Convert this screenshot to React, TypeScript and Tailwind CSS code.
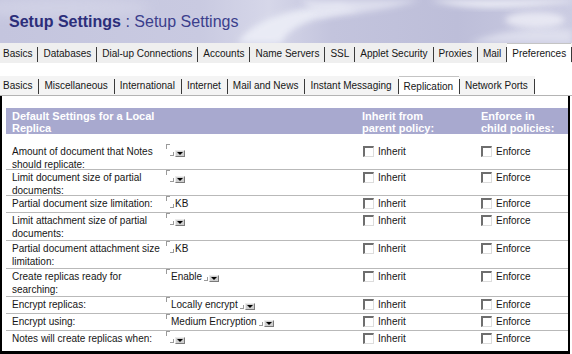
import React from "react";

const row1 = ["Basics", "Databases", "Dial-up Connections", "Accounts", "Name Servers", "SSL", "Applet Security", "Proxies", "Mail", "Preferences"];
const row2 = ["Basics", "Miscellaneous", "International", "Internet", "Mail and News", "Instant Messaging", "Replication", "Network Ports"];

function TabRow({ tabs, active, className, pad }: { tabs: string[]; active: string; className: string; pad: string }) {
  return (
    <div className={`flex items-stretch whitespace-nowrap pl-[3px] ${className}`}>
      {tabs.map((t, i) => (
        <React.Fragment key={i}>
          <div
            className={`flex shrink-0 items-center ${pad} ${i === 0 ? "pl-0" : "pl-[5px]"} ${
              t === active ? "bg-white border-t border-[#c4c4c4]" : ""
            }`}
          >
            {t}
          </div>
          <div className="mb-[1px] h-[15px] w-px shrink-0 self-end bg-[#3a3a3a]" />
        </React.Fragment>
      ))}
    </div>
  );
}

function Drop() {
  return (
    <span className="ml-[1px] mt-[5px] flex h-[7px] w-[10px] items-center justify-center border border-b-[#7a7a7a] border-l-[#ececec] border-r-[#7a7a7a] border-t-[#ececec] bg-[#cfcfcf]">
      <span className="h-0 w-0 border-l-[3px] border-r-[3px] border-t-[3px] border-l-transparent border-r-transparent border-t-black" />
    </span>
  );
}

function Field({ text, drop, suffix }: { text?: string; drop?: boolean; suffix?: string }) {
  return (
    <div className="flex items-start pl-[4px] whitespace-nowrap">
      <span className="-mt-[1px] h-[5px] w-[4px] border-l border-t border-[#9a9a9a]" />
      {text && <span className="ml-[1px] leading-[13px]">{text}</span>}
      <span className={`mt-[7px] h-[4px] w-[4px] border-b border-r border-[#9a9a9a] ${text ? "ml-[2px]" : ""}`} />
      {drop && <Drop />}
      {suffix && <span className="ml-[1px] leading-[13px]">{suffix}</span>}
    </div>
  );
}

function Check({ label }: { label: string }) {
  return (
    <div className="flex items-start pl-[6px]">
      <span className="mt-[1px] h-[11px] w-[11px] border-b border-l-2 border-r border-t-2 border-b-[#dcdcdc] border-l-[#6e6e6e] border-r-[#dcdcdc] border-t-[#6e6e6e] bg-white" />
      <span className="ml-[4px] leading-[13px]">{label}</span>
    </div>
  );
}

type Row = { label: string[]; h: string; pt?: string; field: { text?: string; drop?: boolean; suffix?: string }; last?: boolean };

const rows: Row[] = [
  { label: ["Amount of document that Notes", "should replicate:"], h: "h-[36px]", pt: "pt-[11px]", field: { drop: true } },
  { label: ["Limit document size of partial", "documents:"], h: "h-[26px]", field: { drop: true } },
  { label: ["Partial document size limitation:"], h: "h-[17px]", field: { suffix: "KB" } },
  { label: ["Limit attachment size of partial", "documents:"], h: "h-[28px]", field: { drop: true } },
  { label: ["Partial document attachment size", "limitation:"], h: "h-[28px]", field: { suffix: "KB" } },
  { label: ["Create replicas ready for", "searching:"], h: "h-[28px]", field: { text: "Enable", drop: true } },
  { label: ["Encrypt replicas:"], h: "h-[17px]", field: { text: "Locally encrypt", drop: true } },
  { label: ["Encrypt using:"], h: "h-[17px]", field: { text: "Medium Encryption", drop: true } },
  { label: ["Notes will create replicas when:"], h: "h-[20px]", field: { drop: true }, last: true },
];

function Banner() {
  return (
    <div className="relative h-[43px] w-full overflow-hidden">
      <svg className="absolute left-0 top-0" width="572" height="43" viewBox="0 0 572 43">
        <defs>
          <linearGradient id="bg" x1="0" x2="1" y1="0" y2="0">
            <stop offset="0" stopColor="#c4c5de" />
            <stop offset="0.35" stopColor="#c9cae1" />
            <stop offset="0.47" stopColor="#d6d7e9" />
            <stop offset="0.58" stopColor="#c3c4dd" />
            <stop offset="0.8" stopColor="#bdbed9" />
            <stop offset="1" stopColor="#cbcce2" />
          </linearGradient>
          <filter id="bl" x="-20%" y="-50%" width="140%" height="200%">
            <feGaussianBlur stdDeviation="3" />
          </filter>
          <filter id="bl2" x="-20%" y="-50%" width="140%" height="200%">
            <feGaussianBlur stdDeviation="6" />
          </filter>
        </defs>
        <rect width="572" height="43" fill="url(#bg)" />
        <ellipse cx="60" cy="8" rx="90" ry="10" fill="#d8d9ea" opacity="0.6" filter="url(#bl2)" />
        <path d="M238 43 C 248 24, 285 8, 340 4 L 360 10 C 310 16, 285 30, 282 43 Z" fill="#eceef7" opacity="0.9" filter="url(#bl)" />
        <path d="M300 0 L 420 0 C 390 10, 350 14, 320 18 Z" fill="#e4e5f2" opacity="0.8" filter="url(#bl)" />
        <path d="M430 0 C 470 12, 520 8, 572 2 L 572 0 Z" fill="#f0f1f8" opacity="0.9" filter="url(#bl)" />
        <path d="M470 43 C 500 30, 540 26, 572 30 L 572 43 Z" fill="#e2e3f0" opacity="0.8" filter="url(#bl)" />
        <ellipse cx="535" cy="20" rx="30" ry="8" fill="#f4f4fa" opacity="0.7" filter="url(#bl)" />
      </svg>
      <div className="relative pl-[9px] pt-[12px] text-[16px] leading-[20px] whitespace-nowrap">
        <span className="font-bold text-[#2c2e7a]">Setup Settings</span>
        <span className="text-[#3b3e8c]"> : Setup Settings</span>
      </div>
    </div>
  );
}

export default function App() {
  return (
    <div className="h-[354px] w-[572px] overflow-hidden bg-white font-['Liberation_Sans',Arial,sans-serif] text-[10px] text-[#161616]">
      <Banner />
      <TabRow tabs={row1} active="Preferences" pad="pr-[5px]" className="h-[20px] bg-[#efefef]" />
      <div className="h-[13px]" />
      <div className="h-[20px] border-b border-[#b4b4b4]">
        <TabRow tabs={row2} active="Replication" pad="pr-[6px]" className="h-[19px] w-max bg-[#f4f4f4]" />
      </div>
      <div className="h-[258px] w-[570px] border-b-[3px] border-l-2 border-r-2 border-black pl-[4px] pt-[12px]">
        <div className="grid h-[26px] grid-cols-[156px_195px_118px_1fr] bg-[#a8a9cf] pt-[2px] text-[11px] font-bold leading-[12px] text-white">
          <div className="pl-[6px]">
            Default Settings for a Local
            <br />
            Replica
          </div>
          <div />
          <div className="pl-[5px]">
            Inherit from
            <br />
            parent policy:
          </div>
          <div className="pl-[6px]">
            Enforce in
            <br />
            child policies:
          </div>
        </div>
        {rows.map((r, i) => (
          <div
            key={i}
            className={`grid grid-cols-[156px_195px_118px_1fr] ${r.h} ${r.pt ?? "pt-[1px]"} ${
              r.last ? "" : "border-b border-[#b9b9b9]"
            }`}
          >
            <div className="pl-[6px] leading-[13px] whitespace-nowrap">
              {r.label.map((l, j) => (
                <div key={j}>{l}</div>
              ))}
            </div>
            <Field {...r.field} />
            <Check label="Inherit" />
            <Check label="Enforce" />
          </div>
        ))}
      </div>
    </div>
  );
}
